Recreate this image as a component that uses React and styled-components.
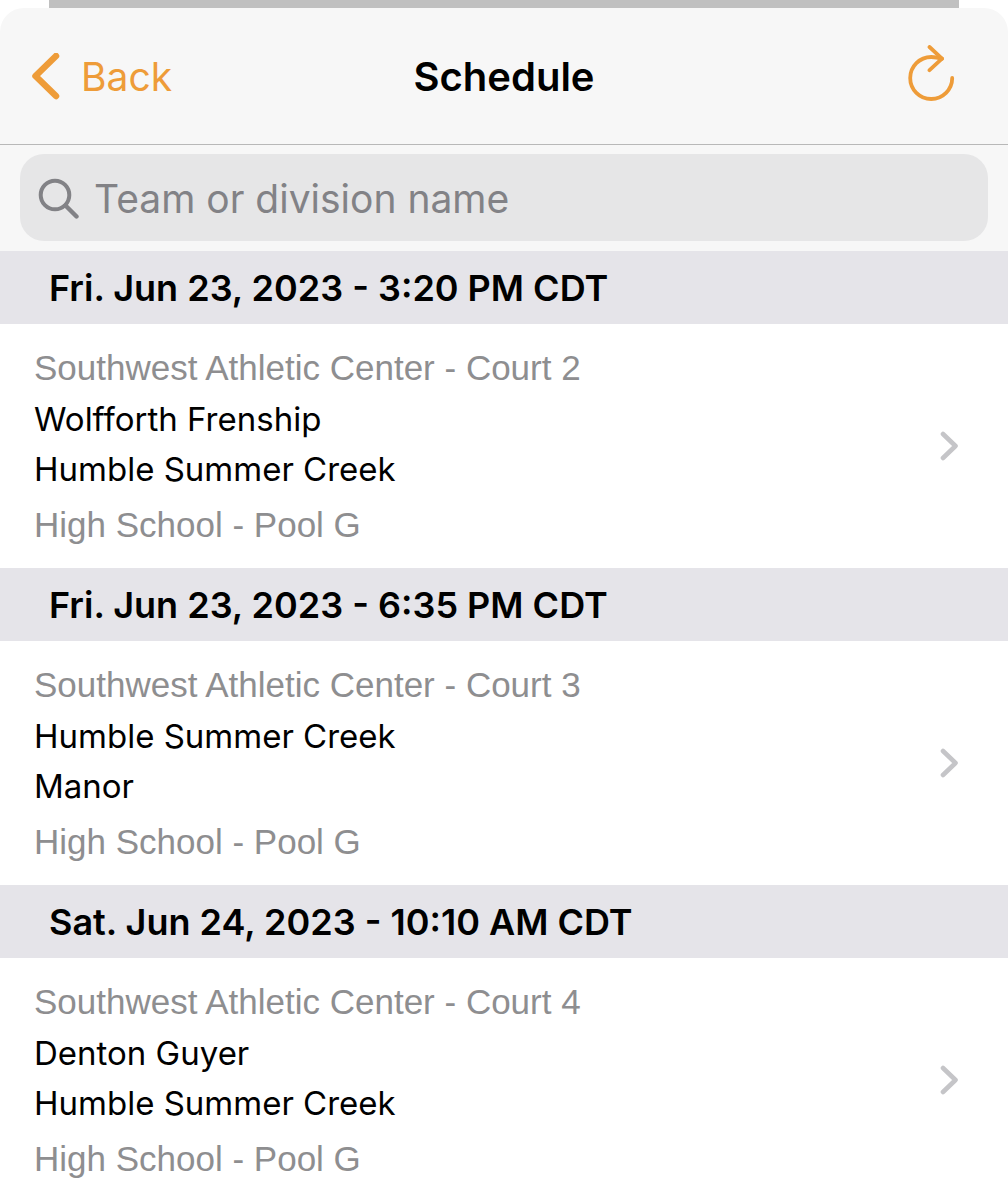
import React from 'react';
import styled, {createGlobalStyle} from 'styled-components';

const GlobalStyle = createGlobalStyle`
  * {
    box-sizing: border-box;
  }

  body {
    margin: 0;
    background: #fff;
    color: #000;
    font-family: Inter, sans-serif;
  }
`;

const Backdrop = styled.div`
  height: 8px;
  margin: 0 49px;
  background: #c0c0c0;
`;

const Sheet = styled.main`
  overflow: hidden;
  border-radius: 24px 24px 0 0;
  background: #fff;
`;

const NavBar = styled.header`
  display: grid;
  grid-template-columns: 1fr auto 1fr;
  align-items: center;
  height: 137px;
  padding: 2px 30px 0;
  border-bottom: 1px solid #b8b8b8;
  background: #f7f7f7;
`;

const BarButton = styled.button`
  display: flex;
  align-items: center;
  justify-self: ${props => props.$side};
  gap: 20px;
  padding: ${props => props.$side === 'end' ? '0 22px' : '0'};
  border: 0;
  background: none;
  color: #ee9c39;
  font: inherit;
  font-size: 39px;
  line-height: 56px;
`;

const Title = styled.h1`
  margin: 0;
  font-size: 40px;
  font-weight: 600;
  line-height: 56px;
`;

const SearchArea = styled.div`
  padding: 9px 20px 10px;
  background: #f7f7f7;
`;

const SearchField = styled.label`
  display: flex;
  align-items: center;
  gap: 14px;
  height: 87px;
  padding: 0 18px;
  border-radius: 24px;
  background: #e6e6e7;
  color: #828286;
`;

const SearchInput = styled.input`
  flex: 1;
  min-width: 0;
  padding: 2px 0 0;
  border: 0;
  outline: 0;
  background: none;
  color: #000;
  font: inherit;
  font-size: 39px;

  &::placeholder {
    color: #828286;
    opacity: 1;
  }
`;

const DateHeading = styled.h2`
  margin: 0;
  padding: 2px 49px 0;
  background: #e5e4e9;
  font-size: 36px;
  font-weight: 600;
  line-height: 71px;
`;

const GameLink = styled.a`
  display: flex;
  align-items: center;
  justify-content: space-between;
  padding: 17px 48px 17px 34px;
  color: #000;
  text-decoration: none;
`;

const Detail = styled.p`
  margin: 0;
  color: #8e8e90;
  font-family: "Liberation Sans", sans-serif;
  font-size: 35px;
  line-height: 53px;
`;

const Teams = styled.div`
  padding-bottom: 4px;
`;

const Team = styled.p`
  margin: 0;
  font-size: 33px;
  line-height: 50px;
`;

const games = [
  {
    time: 'Fri. Jun 23, 2023 - 3:20 PM CDT',
    place: 'Southwest Athletic Center - Court 2',
    teams: ['Wolfforth Frenship', 'Humble Summer Creek'],
    division: 'High School - Pool G'
  },
  {
    time: 'Fri. Jun 23, 2023 - 6:35 PM CDT',
    place: 'Southwest Athletic Center - Court 3',
    teams: ['Humble Summer Creek', 'Manor'],
    division: 'High School - Pool G'
  },
  {
    time: 'Sat. Jun 24, 2023 - 10:10 AM CDT',
    place: 'Southwest Athletic Center - Court 4',
    teams: ['Denton Guyer', 'Humble Summer Creek'],
    division: 'High School - Pool G'
  }
];

const BackIcon = () => (
  <svg width="31" height="48" viewBox="0 0 31 48" fill="none" stroke="currentColor" strokeWidth="6.5" strokeLinecap="round" strokeLinejoin="round" aria-hidden="true">
    <path d="M26 3 5.5 23 26 43"/>
  </svg>
);

const RefreshIcon = () => (
  <svg width="50" height="64" viewBox="0 0 50 64" fill="none" stroke="currentColor" strokeWidth="3.8" strokeLinecap="round" strokeLinejoin="round" aria-hidden="true">
    <path d="M46.2 33A21 21 0 1 1 25.2 12Q30 12 36 13.7"/>
    <path d="M23.5 2 36 13.7 23.5 25.2"/>
  </svg>
);

const SearchIcon = () => (
  <svg width="42" height="42" viewBox="0 0 42 42" fill="none" stroke="currentColor" strokeWidth="4" strokeLinecap="round" aria-hidden="true">
    <circle cx="17" cy="18" r="14.3"/>
    <path d="m27.5 28.5 11 11" strokeWidth="4.4"/>
  </svg>
);

const DisclosureIcon = () => (
  <svg width="20" height="30" viewBox="0 0 20 30" fill="none" stroke="#c5c5c8" strokeWidth="4.6" strokeLinecap="round" strokeLinejoin="round" aria-hidden="true">
    <path d="m3 3 12.5 12L3 27"/>
  </svg>
);

const Game = ({game}) => (
  <section>
    <DateHeading>{game.time}</DateHeading>
    <GameLink href="#game">
      <div>
        <Detail>{game.place}</Detail>
        <Teams>
          {game.teams.map(team => <Team key={team}>{team}</Team>)}
        </Teams>
        <Detail>{game.division}</Detail>
      </div>
      <DisclosureIcon/>
    </GameLink>
  </section>
);

const App = () => (
  <>
    <GlobalStyle/>
    <Backdrop/>
    <Sheet>
      <NavBar>
        <BarButton type="button" $side="start"><BackIcon/>Back</BarButton>
        <Title>Schedule</Title>
        <BarButton type="button" $side="end" aria-label="Refresh"><RefreshIcon/></BarButton>
      </NavBar>
      <SearchArea>
        <SearchField>
          <SearchIcon/>
          <SearchInput type="text" aria-label="Team or division name" placeholder="Team or division name"/>
        </SearchField>
      </SearchArea>
      {games.map(game => <Game key={game.time} game={game}/>)}
    </Sheet>
  </>
);

export default App;
